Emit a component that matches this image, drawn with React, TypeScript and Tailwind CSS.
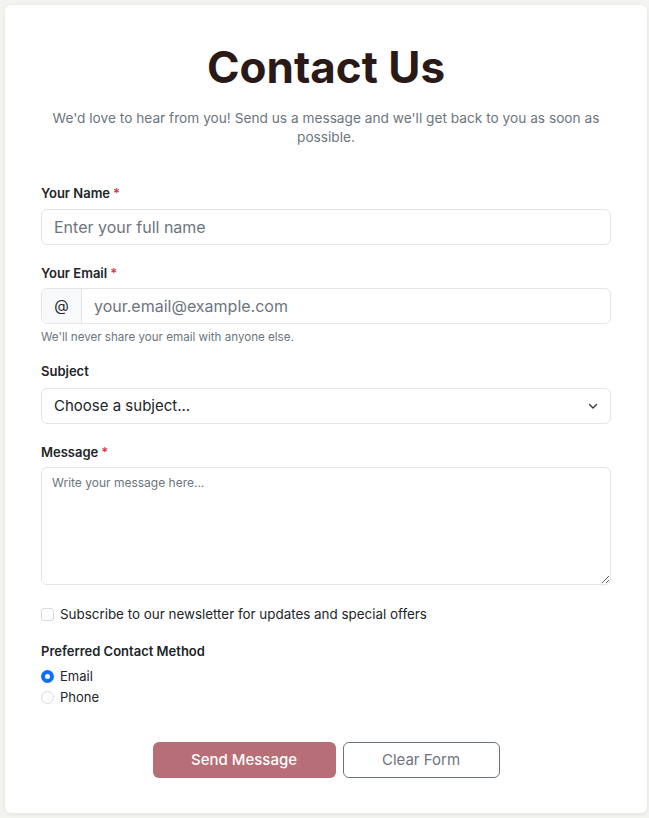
import React from "react";

const font = { fontFamily: "Inter, 'Noto Sans', sans-serif" };

function Req() {
  return <span className="text-[#dc3545] ml-[3px]">*</span>;
}

export default function App() {
  return (
    <div className="min-h-[818px] bg-[#f3f3f0] pt-[5px] pl-[5px] pr-[2px] pb-[6px]" style={font}>
      <div className="bg-white rounded-[6px] shadow-[0_1px_4px_rgba(0,0,0,0.08)] px-[36px] pt-[34px] pb-[35px]">
        <h1 className="text-center text-[44px] leading-[56px] font-bold text-[#2a1a17] tracking-[0px]">Contact Us</h1>
        <p className="mt-[14px] text-center text-[13.7px] leading-[19px] text-[#6c757d] px-[6px]">
          We'd love to hear from you! Send us a message and we'll get back to you as soon as possible.
        </p>

        <div className="mt-[36px]">
          <label className="block text-[13px] leading-[20px] font-semibold text-[#212529]">Your Name<Req /></label>
          <input
            className="mt-[6px] block w-full h-[36px] rounded-[6px] border border-[#e3e4ea] px-[12px] text-[16px] text-[#212529] placeholder:text-[#6c757d] outline-none"
            placeholder="Enter your full name"
          />
        </div>

        <div className="mt-[18px]">
          <label className="block text-[13px] leading-[20px] font-semibold text-[#212529]">Your Email<Req /></label>
          <div className="mt-[5px] flex h-[36px] rounded-[6px] border border-[#e3e4ea] overflow-hidden">
            <span className="w-[40px] flex items-center justify-center bg-[#f8f9fa] border-r border-[#e3e4ea] text-[15px] text-[#212529]">@</span>
            <input
              className="flex-1 px-[12px] text-[16px] text-[#212529] placeholder:text-[#6c757d] outline-none"
              placeholder="your.email@example.com"
            />
          </div>
          <div className="mt-[5px] text-[11.6px] leading-[16px] text-[#6c757d]">We'll never share your email with anyone else.</div>
        </div>

        <div className="mt-[16px]">
          <label className="block text-[13px] leading-[20px] font-semibold text-[#212529]">Subject</label>
          <div className="mt-[7px] relative flex items-center h-[36px] rounded-[6px] border border-[#e3e4ea] px-[12px] text-[15px] text-[#212529]">
            <span>Choose a subject...</span>
            <svg className="absolute right-[12px] top-[14px]" width="10" height="7" viewBox="0 0 10 7" fill="none">
              <path d="M1.5 1.5 5 5 8.5 1.5" stroke="#343a40" strokeWidth="1.4" strokeLinecap="round" strokeLinejoin="round" />
            </svg>
          </div>
        </div>

        <div className="mt-[18px]">
          <label className="block text-[13px] leading-[20px] font-semibold text-[#212529]">Message<Req /></label>
          <textarea
            className="mt-[5px] block w-full h-[118px] rounded-[6px] border border-[#e3e4ea] px-[10px] py-[6px] text-[12px] leading-[18px] text-[#212529] placeholder:text-[#6c757d] outline-none"
            placeholder="Write your message here..."
          />
        </div>

        <div className="mt-[19px] flex items-center h-[20px]">
          <span className="w-[13px] h-[13px] rounded-[3px] border border-[#d8d9de] bg-white" />
          <span className="ml-[6px] text-[13.4px] text-[#212529]">Subscribe to our newsletter for updates and special offers</span>
        </div>

        <div className="mt-[17px]">
          <div className="text-[13px] leading-[20px] font-semibold text-[#212529]">Preferred Contact Method</div>
          <div className="mt-[5px] flex items-center h-[21px]">
            <span className="w-[13px] h-[13px] rounded-full bg-[#0d6efd] flex items-center justify-center">
              <span className="w-[5px] h-[5px] rounded-full bg-white" />
            </span>
            <span className="ml-[6px] text-[13px] text-[#212529]">Email</span>
          </div>
          <div className="flex items-center h-[21px]">
            <span className="w-[13px] h-[13px] rounded-full border border-[#d8d9de] bg-white" />
            <span className="ml-[6px] text-[13px] text-[#212529]">Phone</span>
          </div>
        </div>

        <div className="mt-[34px] flex justify-center gap-[7px]">
          <button className="w-[183px] h-[36px] rounded-[6px] bg-[#b76e76] text-white text-[15px] font-medium">Send Message</button>
          <button className="w-[157px] h-[36px] rounded-[6px] border border-[#6c757d] bg-white text-[#6c757d] text-[15px]">Clear Form</button>
        </div>
      </div>
    </div>
  );
}
